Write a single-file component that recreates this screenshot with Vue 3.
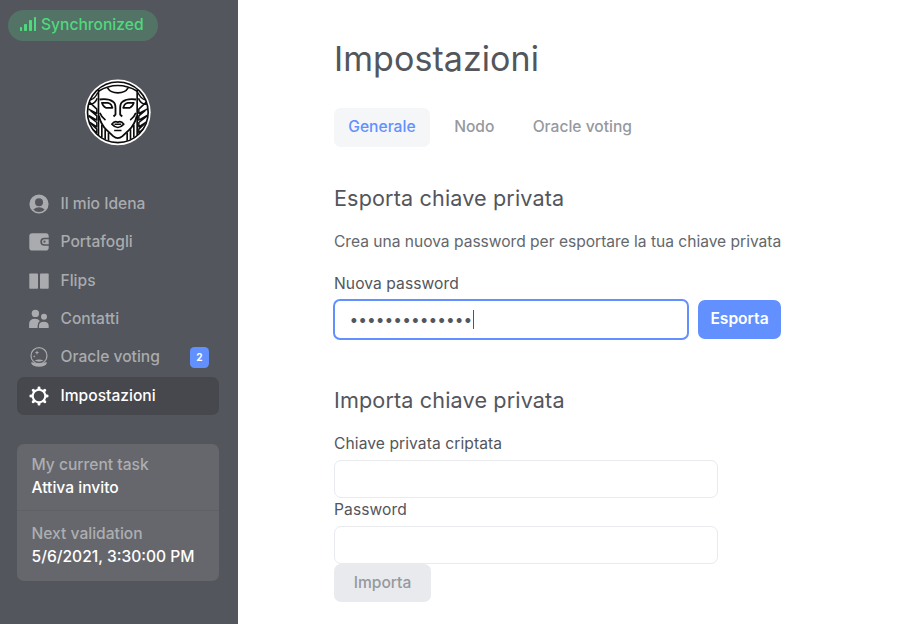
<script setup>
import { ref } from 'vue'

const nav = [
  { label: 'Il mio Idena', icon: 'profile' },
  { label: 'Portafogli', icon: 'wallet' },
  { label: 'Flips', icon: 'flips' },
  { label: 'Contatti', icon: 'contacts' },
  { label: 'Oracle voting', icon: 'oracle', badge: 2 },
  { label: 'Impostazioni', icon: 'settings', active: true },
]
const tabs = ['Generale', 'Nodo', 'Oracle voting']
const teeth = [0, 45, 90, 135, 180, 225, 270, 315]
const dots = '•'.repeat(14)
const key = ref('')
const password = ref('')
</script>

<template>
  <div class="app">
    <aside class="sidebar">
      <div class="status">
        <svg width="17" height="15" viewBox="0 0 17 15" fill="currentColor">
          <rect x="0" y="10" width="2" height="4" rx=".5" />
          <rect x="4" y="7" width="3" height="7" rx=".8" />
          <rect x="9" y="3" width="3" height="11" rx=".8" />
          <rect x="14" y="0" width="2" height="14" rx=".5" />
        </svg>
        <span>Synchronized</span>
      </div>

      <svg class="logo" width="67" height="67" viewBox="18.500 15.500 201 201">
        <circle cx="120" cy="115.500" r="98.500" fill="#fff" />
        <g fill="none" stroke="#0c0c0c" stroke-width="5" stroke-linejoin="round">
          <circle cx="120" cy="115.500" r="91" />
          <path d="M62 48V184M178 48V184" />
          <path d="M62 52Q90 35 120 35T178 52" />
          <path d="M89 42Q98 57 120 57T151 42" />
          <path d="M65 77Q92 73 106 84Q113 89 113 103V122L107 128M175 77Q148 73 134 84Q127 89 127 103V122L133 128" stroke-width="5.500" />
          <path d="M72 87H90Q96 88 100 93L104 102H84Q76 99 72 87ZM168 87H150Q144 88 140 93L136 102H156Q164 99 168 87Z" />
          <path d="M66 117Q71 130 83 139M174 117Q169 130 157 139" />
          <path d="M63 126Q70 154 86 168L106 187Q120 199 134 187L154 168Q170 154 177 126" stroke-width="5.500" />
          <path d="M72 153V191M82 166V196M92 176V201M168 153V191M158 166V196M148 176V201" />
          <path d="M102 151Q110 140 120 145Q130 140 138 151Q129 161 120 161T102 151Z" />
          <path d="M110 151H130M109 170H131" stroke-width="4.500" />
          <path d="M39 78Q52 73 60 56M33 91Q52 92 58 73M32 106L57 119V106L34 84M32 125L57 139V126L33 106M35 145L57 159V146L32 126M44 166L57 177V166L38 148" stroke-width="4.500" />
          <path d="M201 78Q188 73 180 56M207 91Q188 92 182 73M208 106L183 119V106L206 84M208 125L183 139V126L207 106M205 145L183 159V146L208 126M196 166L183 177V166L202 148" stroke-width="4.500" />
        </g>
      </svg>

      <nav class="nav">
        <a v-for="item in nav" :key="item.label" class="nav-item" :class="{ active: item.active }">
          <svg class="icon" width="20" height="20" viewBox="0 0 20 20" fill="currentColor">
            <template v-if="item.icon === 'profile'">
              <path fill-rule="evenodd" d="M10 .4a9.600 9.600 0 1 0 0 19.200A9.600 9.600 0 0 0 10 .4ZM10 4.200a4 4 0 1 1 0 8 4 4 0 0 1 0-8ZM4.300 15.400Q7 13.300 10 13.300T15.700 15.400Q13.500 18 10 18T4.300 15.400Z" />
            </template>
            <path v-else-if="item.icon === 'wallet'" fill-rule="evenodd" d="M3.200 1.200H16.800Q19.700 1.200 19.700 4.100V5.700H15.500Q11.300 5.700 11.300 9.700T15.500 13.700H19.700V15.800Q19.700 18.600 16.800 18.600H3.200Q.3 18.600 .3 15.800V4.100Q.3 1.200 3.200 1.200ZM15.500 7.200H19.700V12.200H15.500Q13 12.200 13 9.700T15.500 7.200ZM15.500 8.600a1.100 1.100 0 1 0 0 2.200 1.100 1.100 0 0 0 0-2.200Z" />
            <template v-else-if="item.icon === 'flips'">
              <rect x=".3" y="2.500" width="8.700" height="15.200" rx=".8" />
              <rect x="11" y="2.500" width="8.700" height="15.200" rx=".8" />
            </template>
            <template v-else-if="item.icon === 'contacts'">
              <circle cx="6.400" cy="4.400" r="3.700" />
              <circle cx="15" cy="7.800" r="3" />
              <path d="M.1 19V15.200Q.1 9.700 6 9.700Q9.400 9.700 10.800 12.100Q8.600 13.800 8.600 17V19ZM10 19V16.800Q10 12.700 14.800 12.700T19.700 16.800V19Z" />
            </template>
            <template v-else-if="item.icon === 'oracle'">
              <circle cx="10" cy="8.700" r="8" fill="none" stroke="currentColor" stroke-width="1.200" />
              <path d="M2.600 15Q10 18.600 17.400 15L17.800 16.300Q16.500 19.700 10 19.700T2.200 16.300ZM5.500 13.600Q10 11.500 14.500 13.600Q10 15.700 5.500 13.600ZM8 3.300L8.600 5.100L10.300 5.700L8.600 6.300L8 8L7.400 6.300L5.700 5.700L7.400 5.100ZM5.200 8L5.600 9L6.500 9.400L5.600 9.800L5.200 10.700L4.800 9.800L4 9.400L4.800 9Z" />
            </template>
            <template v-else>
              <circle cx="10" cy="10" r="6.300" fill="none" stroke="currentColor" stroke-width="2.100" />
              <path v-for="angle in teeth" :key="angle" d="M8.300 3.600L8.800 .8Q10 0 11.200 .8L11.700 3.600Z" :transform="`rotate(${angle} 10 10)`" />
            </template>
          </svg>
          <span class="nav-label">{{ item.label }}</span>
          <span v-if="item.badge" class="badge">{{ item.badge }}</span>
        </a>
      </nav>

      <section class="tasks">
        <div class="task">
          <div class="task-title">My current task</div>
          <div class="task-value">Attiva invito</div>
        </div>
        <div class="task">
          <div class="task-title">Next validation</div>
          <div class="task-value">5/6/2021, 3:30:00 PM</div>
        </div>
      </section>
    </aside>

    <main class="content">
      <h1>Impostazioni</h1>
      <div class="tabs">
        <button v-for="(tab, i) in tabs" :key="tab" class="tab" :class="{ selected: i === 0 }">{{ tab }}</button>
      </div>

      <section class="export">
        <h2>Esporta chiave privata</h2>
        <p>Crea una nuova password per esportare la tua chiave privata</p>
        <label>Nuova password</label>
        <div class="export-row">
          <div class="field focused"><span class="dots">{{ dots }}</span><span class="caret"></span></div>
          <button class="primary">Esporta</button>
        </div>
      </section>

      <section class="import">
        <h2>Importa chiave privata</h2>
        <label>Chiave privata criptata</label>
        <input v-model="key" class="field" type="text" />
        <label>Password</label>
        <input v-model="password" class="field" type="password" />
        <button class="secondary" disabled>Importa</button>
      </section>
    </main>
  </div>
</template>

<style>
body {
  background: #fff;
}
</style>

<style scoped>
.app {
  display: flex;
  height: 624px;
  overflow: hidden;
  font-family: Inter, "Liberation Sans", sans-serif;
  font-size: 15.6px;
  line-height: 24px;
  color: #53565c;
}
.app * {
  box-sizing: border-box;
}
button,
input {
  font: inherit;
  border: 0;
  margin: 0;
}
.sidebar {
  width: 238px;
  flex: none;
  display: flex;
  flex-direction: column;
  align-items: flex-start;
  padding: 10px 19px 0 17px;
  background: #53565c;
  font-weight: 500;
}
.status {
  display: flex;
  align-items: center;
  gap: 4px;
  width: 150px;
  height: 31px;
  margin-left: -9px;
  padding: 0 0 2px 12px;
  border-radius: 16px;
  background: #537367;
  color: #4fd97d;
}
.status svg {
  margin-top: -1px;
}
.logo {
  margin: 38px 0 0 67px;
}
.nav {
  width: 100%;
  margin-top: 38.800px;
}
.nav-item {
  display: flex;
  align-items: center;
  height: 38.350px;
  padding: 0 10px 0 12px;
  border-radius: 7px;
  color: #a9abae;
}
.nav-item.active {
  background: #47484d;
  color: #fff;
}
.nav-label {
  flex: 1;
  margin-left: 11.500px;
}
.badge {
  width: 19px;
  height: 21px;
  border-radius: 4.500px;
  background: #6290ff;
  color: #fff;
  font-size: 10px;
  font-weight: 700;
  line-height: 21px;
  text-align: center;
}
.tasks {
  width: 100%;
  height: 137px;
  margin-top: 29.300px;
  border-radius: 7px;
  background: #66676c;
}
.task {
  height: 66px;
  padding: 9px 14.500px 0;
  line-height: 23px;
}
.task + .task {
  height: 70px;
  padding-top: 11px;
  border-top: 1px solid #5f6166;
}
.task-title {
  color: #acaeb1;
}
.task-value {
  color: #fff;
}
.content {
  width: 448px;
  margin-left: 96px;
  padding-top: 36px;
}
h1,
h2,
p {
  margin: 0;
  font-weight: 400;
}
h1 {
  font-size: 34px;
  letter-spacing: .07px;
  line-height: 46px;
}
.tabs {
  display: flex;
  gap: 10px;
  margin-top: 26px;
}
.tab {
  height: 39px;
  padding: 0 14.300px 2px;
  border-radius: 7px;
  background: transparent;
  color: #96999e;
  font-weight: 500;
}
.tab + .tab {
  margin-right: -.4px;
}
.tab.selected {
  background: #f5f6f7;
  color: #6290ff;
}
.export {
  margin-top: 37px;
}
h2 {
  font-size: 21.600px;
  letter-spacing: .14px;
  line-height: 29px;
}
.export p {
  margin-top: 17px;
  color: #64676c;
  letter-spacing: -.02px;
  line-height: 24px;
  white-space: nowrap;
}
label {
  display: block;
  letter-spacing: .08px;
}
.export label {
  margin-top: 18px;
}
.export-row {
  display: flex;
  align-items: center;
  margin: 3px 0 0 -1px;
}
.field {
  display: block;
  width: 384px;
  height: 38px;
  padding: 0 16px;
  border: 1px solid #e8eaed;
  border-radius: 7px;
  background: #fff;
}
.focused {
  display: flex;
  align-items: center;
  width: 356px;
  height: 41px;
  padding-left: 14.500px;
  border: 2px solid #6290ff;
}
.caret {
  width: 1px;
  height: 19px;
  margin-left: .5px;
  background: #53565c;
}
.primary {
  width: 83px;
  height: 39px;
  margin-left: 9px;
  padding: 0 0 2px;
  border-radius: 7px;
  background: #6290ff;
  color: #fff;
  font-weight: 600;
}
.import {
  margin-top: 46px;
}
.import h2 {
  margin-bottom: 17px;
}
.import .field {
  margin-top: 4px;
}
.import .field + label {
  margin-top: 0;
}
.secondary {
  display: block;
  width: 97px;
  height: 38px;
  padding: 0 0 1px;
  border-radius: 7px;
  background: #e8eaed;
  color: #96999e;
  font-weight: 500;
}
</style>
